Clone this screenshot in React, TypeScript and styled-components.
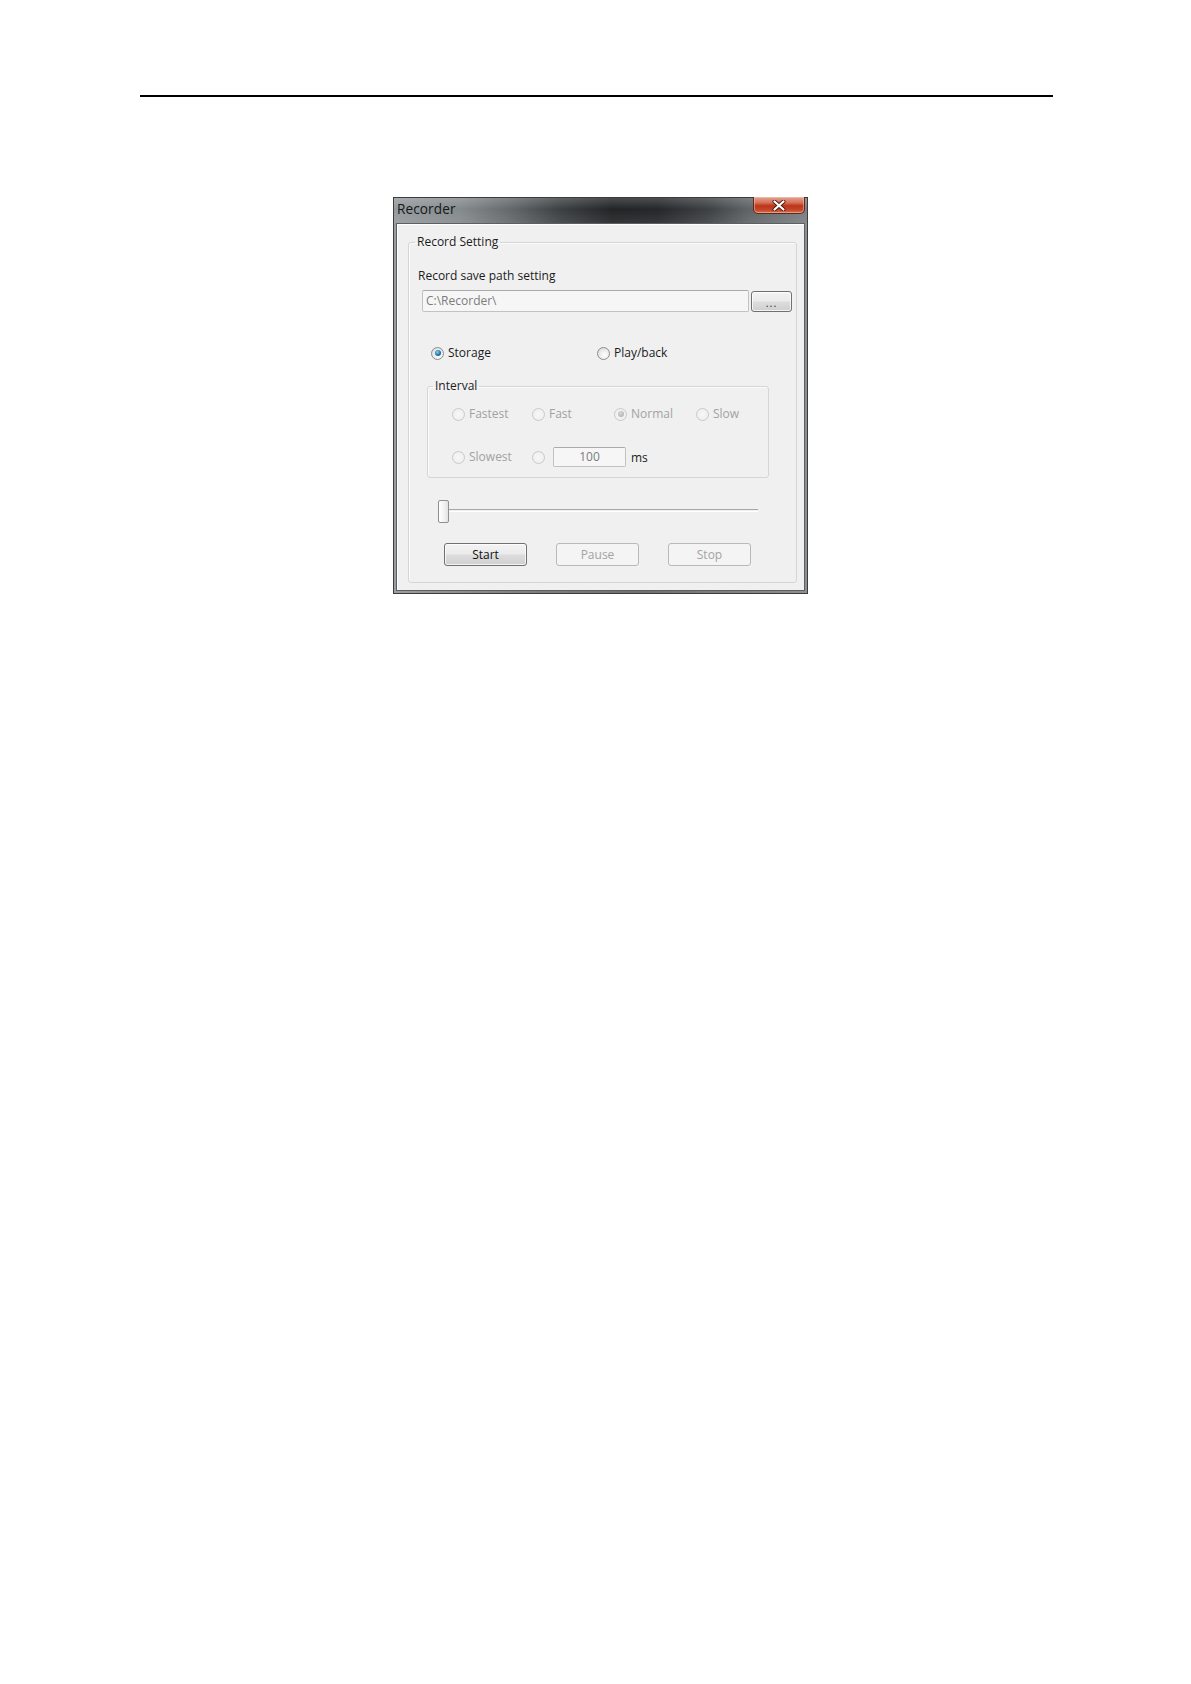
import React from "react";
import styled, { createGlobalStyle, css } from "styled-components";

const GlobalStyle = createGlobalStyle`
	html, body {
		margin: 0;
		padding: 0;
		background: #ffffff;
	}
	body {
		font-family: "Open Sans", "Liberation Sans", Arial, sans-serif;
		color: #1b1b1b;
	}
`;

const Page = styled.div`
	width: 1191px;
	height: 1684px;
	padding-top: 95px;
	box-sizing: border-box;
	background: #ffffff;
`;

const HeaderRule = styled.div`
	margin-left: 140px;
	width: 913px;
	height: 2px;
	background: #000000;
`;

const Window = styled.div`
	margin-top: 100px;
	margin-left: 393px;
	width: 415px;
	box-sizing: border-box;
	border: 1px solid #3a3c3e;
	background: linear-gradient(90deg, #9a9ea1 0%, #7e8285 30%, #6c7073 60%, #8c9093 100%);
	display: flex;
	flex-direction: column;
`;

const TitleBar = styled.div`
	height: 25px;
	display: flex;
	align-items: flex-start;
	justify-content: space-between;
	padding: 0 2px 0 3px;
	background:
		linear-gradient(180deg, rgba(255, 255, 255, 0.18) 0%, rgba(255, 255, 255, 0) 45%, rgba(255, 255, 255, 0.08) 100%),
		linear-gradient(90deg, #959a9d 0%, #858a8d 16%, #65696c 28%, #3e4143 40%, #222426 53%, #25272a 64%, #3e4143 76%, #606467 86%, #7c8083 100%);
`;

const Title = styled.span`
	font-size: 13.6px;
	line-height: 22px;
	color: #16181a;
	letter-spacing: 0.1px;
`;

const CloseButton = styled.div`
	width: 52px;
	height: 17px;
	margin-top: -1px;
	box-sizing: border-box;
	border: 1px solid #5c2a20;
	border-top: none;
	border-radius: 0 0 5px 5px;
	background: linear-gradient(180deg, #e4a48f 0%, #d6705a 35%, #bc3518 55%, #c4462a 80%, #d96f4c 100%);
	box-shadow: inset 0 0 0 1px rgba(255, 210, 190, 0.45);
	display: flex;
	align-items: center;
	justify-content: center;
`;

const Frame = styled.div`
	padding: 0 2px 2px 2px;
`;

const Client = styled.div`
	border: 1px solid #5d6063;
	background: #f0f0f0;
	box-shadow: inset 1px 1px 0 #ffffff;
	padding: 10px 7px 7px 11px;
`;

const GroupBox = styled.fieldset<{ $tight?: boolean }>`
	margin: 0;
	min-width: 0;
	border: 1px solid #d5d5d5;
	border-radius: 3px;
	box-shadow: inset 1px 1px 0 #fbfbfb;
	padding: 0;
	display: flex;
	flex-direction: column;
	align-items: flex-start;
	${(p) =>
		p.$tight &&
		css`
			padding: 0 0 9px 0;
		`}
`;

const Legend = styled.legend<{ $offset: number }>`
	margin-left: ${(p) => p.$offset}px;
	padding: 0 2px;
	font-size: 12px;
	line-height: 16px;
	color: #1b1b1b;
`;

const Label = styled.div`
	margin: 18px 0 0 9px;
	font-size: 12px;
	line-height: 16px;
	color: #1b1b1b;
`;

const PathRow = styled.div`
	margin: 6px 0 0 13px;
	display: flex;
	align-items: center;
	gap: 2px;
`;

const TextBox = styled.div<{ $width: number; $center?: boolean }>`
	width: ${(p) => p.$width}px;
	height: ${(p) => (p.$center ? 20 : 22)}px;
	box-sizing: border-box;
	border: 1px solid #c2c2c2;
	border-top-color: #ababab;
	border-radius: 2px;
	background: #f6f6f6;
	padding: 0 3px;
	font-size: 12px;
	line-height: ${(p) => (p.$center ? 18 : 20)}px;
	color: #7c7c7c;
	text-align: ${(p) => (p.$center ? "center" : "left")};
`;

const Button = styled.div<{ $width: number; $height?: number; $disabled?: boolean }>`
	width: ${(p) => p.$width}px;
	height: ${(p) => p.$height ?? 23}px;
	box-sizing: border-box;
	border-radius: 3px;
	display: flex;
	align-items: center;
	justify-content: center;
	font-size: 12px;
	${(p) =>
		p.$disabled
			? css`
					border: 1px solid #b7babc;
					background: #f4f4f4;
					color: #a3a3a3;
				`
			: css`
					border: 1px solid #707070;
					background: linear-gradient(180deg, #f3f3f3 0%, #ebebeb 48%, #dddddd 52%, #cfcfcf 100%);
					box-shadow: inset 0 0 0 1px rgba(255, 255, 255, 0.75);
					color: #111111;
				`}
`;

const Dots = styled.span`
	font-size: 11px;
	letter-spacing: 1px;
	line-height: 10px;
	margin-top: 3px;
	color: #333;
`;

const ModeRow = styled.div`
	margin: 33px 0 0 22px;
	display: grid;
	grid-template-columns: 166px auto;
	height: 16px;
	align-items: center;
`;

const IntervalWrap = styled.div`
	margin: 17px 0 0 18px;
	width: 342px;
`;

const IntervalGrid = styled.div`
	margin: 9px 0 0 24px;
	display: grid;
	grid-template-columns: 80px 82px 82px auto;
	grid-auto-rows: 22px;
	row-gap: 21px;
	align-items: center;
`;

const Option = styled.div<{ $disabled?: boolean }>`
	display: flex;
	align-items: center;
	gap: 4px;
	font-size: 12px;
	line-height: 16px;
	color: ${(p) => (p.$disabled ? "#a2a2a2" : "#1b1b1b")};
	white-space: nowrap;
`;

const Radio = styled.span<{ $checked?: boolean; $disabled?: boolean }>`
	position: relative;
	flex: none;
	width: 13px;
	height: 13px;
	box-sizing: border-box;
	border-radius: 50%;
	border: 1px solid ${(p) => (p.$disabled ? "#c9c9c9" : "#8a8d90")};
	background: ${(p) =>
		p.$disabled
			? "radial-gradient(circle at 50% 50%, #f7f7f7 0%, #ececec 100%)"
			: "radial-gradient(circle at 60% 65%, #ffffff 0%, #e9e9e9 55%, #cfd1d3 100%)"};
	${(p) =>
		p.$checked &&
		css`
			&::after {
				content: "";
				position: absolute;
				left: 2.5px;
				top: 2.5px;
				width: 6px;
				height: 6px;
				border-radius: 50%;
				background: ${p.$disabled
					? "radial-gradient(circle at 40% 35%, #d8d8d8 0%, #a8a8a8 100%)"
					: "radial-gradient(circle at 40% 35%, #7fd0f4 0%, #1b6f9e 60%, #0f4a6d 100%)"};
			}
		`}
`;

const CustomCell = styled.div`
	display: flex;
	align-items: center;
	gap: 8px;
	grid-column: 2 / span 3;
`;

const Unit = styled.span`
	margin-left: -3px;
	font-size: 12px;
	color: #1b1b1b;
`;

const SliderRow = styled.div`
	margin: 22px 0 0 29px;
	width: 320px;
	height: 23px;
	display: flex;
	align-items: flex-start;
`;

const Thumb = styled.div`
	flex: none;
	width: 11px;
	height: 23px;
	box-sizing: border-box;
	border: 1px solid #8d9093;
	border-radius: 2px;
	background: linear-gradient(90deg, #ffffff 0%, #f1f1f1 60%, #e2e2e2 100%);
`;

const Track = styled.div`
	flex: 1;
	margin-top: 9px;
	height: 1px;
	border-top: 1px solid #a8a8a8;
	border-bottom: 1px solid #ffffff;
`;

const ButtonRow = styled.div`
	margin: 20px 0 16px 35px;
	display: flex;
	gap: 29px;
`;

const CloseGlyph = () => (
	<svg width="14" height="11" viewBox="0 0 14 11">
		<path d="M2.5 1.5 L11.5 9.5 M11.5 1.5 L2.5 9.5" stroke="#4a1a10" strokeWidth="4" strokeLinecap="round" />
		<path d="M2.5 1.5 L11.5 9.5 M11.5 1.5 L2.5 9.5" stroke="#ffffff" strokeWidth="2.2" strokeLinecap="round" />
	</svg>
);

const intervalOptions = [
	{ label: "Fastest", checked: false },
	{ label: "Fast", checked: false },
	{ label: "Normal", checked: true },
	{ label: "Slow", checked: false },
];

const App = () => {
	return (
		<>
			<GlobalStyle />
			<Page>
				<HeaderRule />
				<Window>
					<TitleBar>
						<Title>Recorder</Title>
						<CloseButton>
							<CloseGlyph />
						</CloseButton>
					</TitleBar>
					<Frame>
						<Client>
							<GroupBox>
								<Legend $offset={6}>Record Setting</Legend>
								<Label>Record save path setting</Label>
								<PathRow>
									<TextBox $width={327}>C:\Recorder\</TextBox>
									<Button $width={41} $height={21}>
										<Dots>...</Dots>
									</Button>
								</PathRow>

								<ModeRow>
									<Option>
										<Radio $checked />
										Storage
									</Option>
									<Option>
										<Radio />
										Play/back
									</Option>
								</ModeRow>

								<IntervalWrap>
									<GroupBox $tight>
										<Legend $offset={5}>Interval</Legend>
										<IntervalGrid>
											{intervalOptions.map((opt) => (
												<Option key={opt.label} $disabled>
													<Radio $disabled $checked={opt.checked} />
													{opt.label}
												</Option>
											))}
											<Option $disabled>
												<Radio $disabled />
												Slowest
											</Option>
											<CustomCell>
												<Radio $disabled />
												<TextBox $width={73} $center>
													100
												</TextBox>
												<Unit>ms</Unit>
											</CustomCell>
										</IntervalGrid>
									</GroupBox>
								</IntervalWrap>

								<SliderRow>
									<Thumb />
									<Track />
								</SliderRow>

								<ButtonRow>
									<Button $width={83}>Start</Button>
									<Button $width={83} $disabled>
										Pause
									</Button>
									<Button $width={83} $disabled>
										Stop
									</Button>
								</ButtonRow>
							</GroupBox>
						</Client>
					</Frame>
				</Window>
			</Page>
		</>
	);
};

export default App;
